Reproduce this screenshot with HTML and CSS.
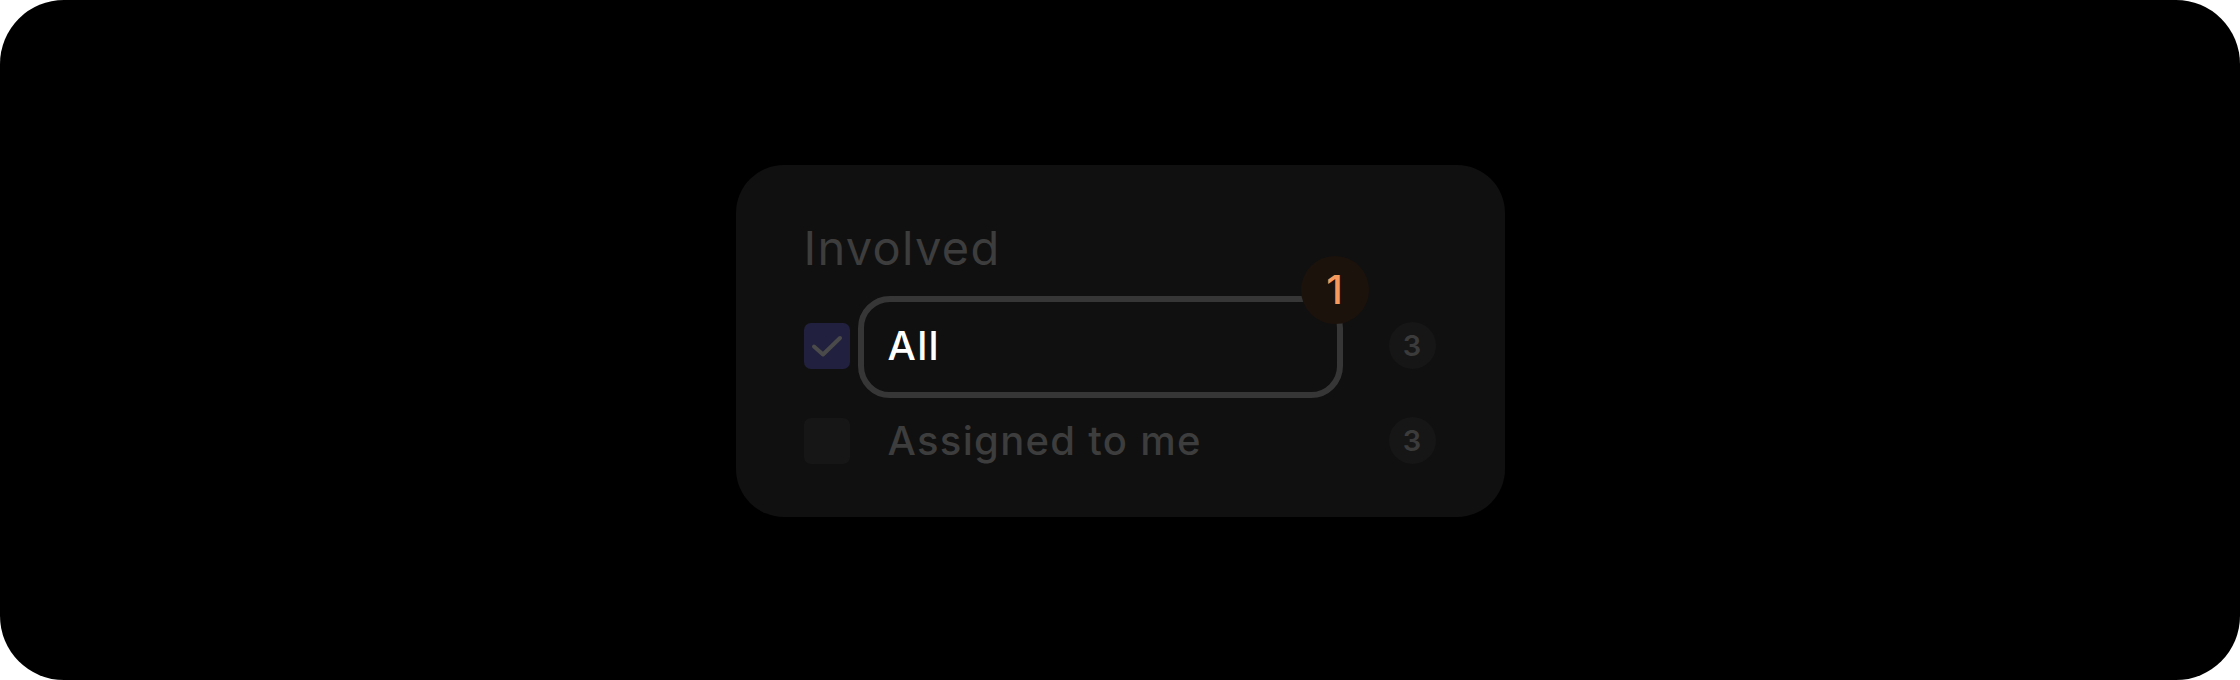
FILE: index.html
```html
<!DOCTYPE html>
<html lang="en">
<head>
<meta charset="utf-8">
<title>Involved filter</title>
<link rel="stylesheet" href="styles.css">
</head>
<body>
<div class="frame">
  <section class="card">
    <h2 class="title">Involved</h2>
    <ul class="options">
      <li class="option">
        <span class="checkbox checked">
          <svg viewBox="0 0 46 46" width="46" height="46" aria-hidden="true">
            <path d="M10 23.5 L19 31.5 L36 15" fill="none" stroke="#4a4a4a" stroke-width="4" stroke-linecap="round" stroke-linejoin="round"/>
          </svg>
        </span>
        <span class="label active">All
          <span class="highlight">
            <span class="step">1</span>
          </span>
        </span>
        <span class="count">3</span>
      </li>
      <li class="option">
        <span class="checkbox"></span>
        <span class="label">Assigned to me</span>
        <span class="count">3</span>
      </li>
    </ul>
  </section>
</div>
</body>
</html>
```

FILE: styles.css
```css
html, body {
  margin: 0;
  padding: 0;
  background: #ffffff;
}

body {
  font-family: Inter, "Noto Sans", sans-serif;
}

.frame {
  width: 2240px;
  height: 680px;
  background: #000000;
  border-radius: 64px;
  display: flex;
  align-items: center;
  justify-content: center;
}

.card {
  width: 769px;
  box-sizing: border-box;
  padding: 59px 69px 53px 68px;
  background: #101010;
  border-radius: 48px;
  margin-top: 1px;
}

.title {
  margin: 0;
  font-size: 47px;
  line-height: 47px;
  font-weight: 400;
  color: #3d3d3d;
  letter-spacing: 1.3px;
}

.options {
  list-style: none;
  margin: 52px 0 0;
  padding: 0;
  display: flex;
  flex-direction: column;
  gap: 49px;
}

.option {
  display: flex;
  align-items: center;
  height: 46px;
}

.checkbox {
  width: 46px;
  height: 46px;
  border-radius: 7px;
  background: #161616;
  flex: none;
  display: block;
}

.checkbox svg {
  display: block;
}

.checkbox.checked {
  background: #21203e;
}

.label {
  position: relative;
  flex: 1;
  margin-left: 38px;
  font-size: 40px;
  line-height: 46px;
  font-weight: 500;
  color: #3d3d3d;
  letter-spacing: 1.3px;
}

.label.active {
  color: #ffffff;
}

.highlight {
  position: absolute;
  left: -30px;
  top: -27px;
  width: 485px;
  height: 102px;
  box-sizing: border-box;
  border: 6px solid #363636;
  border-radius: 32px;
}

.step {
  position: absolute;
  left: 437px;
  top: -46px;
  width: 68px;
  height: 68px;
  border-radius: 50%;
  background: #1c120c;
  color: #f5995c;
  font-size: 40px;
  line-height: 68px;
  font-weight: 500;
  text-align: center;
  letter-spacing: 0;
}

.count {
  flex: none;
  width: 47px;
  height: 47px;
  border-radius: 50%;
  background: #161616;
  color: #3b3b3b;
  font-size: 29px;
  line-height: 47px;
  font-weight: 600;
  text-align: center;
}
```
